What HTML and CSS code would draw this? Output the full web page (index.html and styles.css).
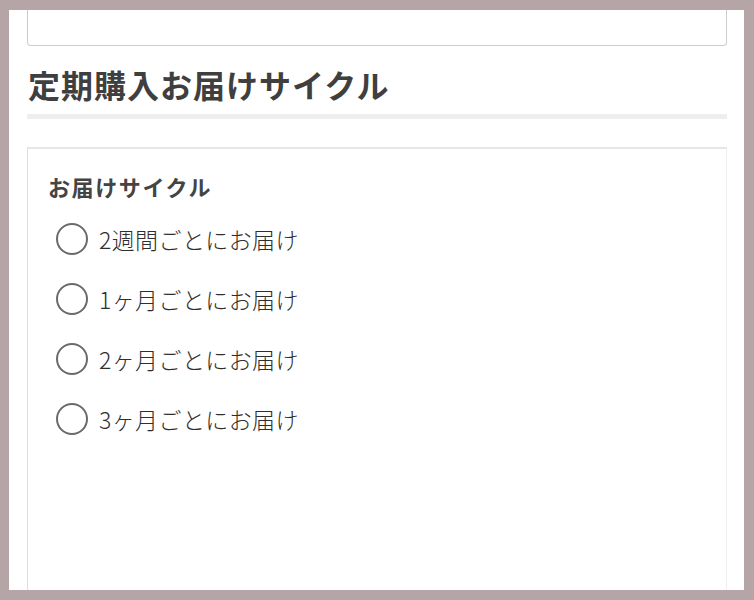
FILE: index.html
```html
<!DOCTYPE html>
<html lang="ja">
<head>
  <meta charset="UTF-8" />
  <meta name="viewport" content="width=device-width, initial-scale=1.0"/>
  <title>定期購入お届けサイクル</title>
  <link rel="stylesheet" href="styles.css">
</head>
<body>
  <div class="page">
    <div class="prev-card"></div>

    <h2 class="section-title">定期購入お届けサイクル</h2>

    <div class="cycle-card">
      <h3 class="cycle-label">お届けサイクル</h3>
      <div class="options">
        <label class="option"><input type="radio" name="cycle" value="2w"><span>2週間ごとにお届け</span></label>
        <label class="option"><input type="radio" name="cycle" value="1m"><span>1ヶ月ごとにお届け</span></label>
        <label class="option"><input type="radio" name="cycle" value="2m"><span>2ヶ月ごとにお届け</span></label>
        <label class="option"><input type="radio" name="cycle" value="3m"><span>3ヶ月ごとにお届け</span></label>
      </div>
    </div>
  </div>
</body>
</html>
```

FILE: styles.css
```css
* {
  margin: 0;
  padding: 0;
  box-sizing: border-box;
}

body {
  background: #b5a5a7;
  padding: 10px 10px 10px 9px;
  font-family: "Noto Sans CJK JP", "Noto Sans", sans-serif;
  color: #333;
}

.page {
  height: 580px;
  background: #fff;
  padding: 0 17px 0 18px;
  overflow: hidden;
}

.prev-card {
  height: 36px;
  border: 1px solid #ccc;
  border-top: none;
  border-radius: 0 0 4px 4px;
}

.section-title {
  margin-top: 17px;
  padding: 0 0 9px 1px;
  font-size: 32px;
  line-height: 42px;
  letter-spacing: 1px;
  font-weight: 700;
  color: #3f3f3f;
  border-bottom: 5px solid #eee;
}

.cycle-card {
  margin-top: 28px;
  height: 500px;
  border: 1px solid #ddd;
  border-top: 2px solid #e6e6e6;
  border-right-color: #eee;
  padding: 22px 0 0 20px;
}

.cycle-label {
  font-size: 22px;
  line-height: 30px;
  letter-spacing: 1.6px;
  font-weight: 700;
  color: #444;
}

.options {
  margin-top: 8px;
}

.option {
  display: flex;
  align-items: center;
  height: 60px;
  padding-left: 8px;
  font-size: 23px;
  letter-spacing: 0.4px;
  font-weight: 300;
  color: #2e2e2e;
  cursor: pointer;
}

.option input {
  appearance: none;
  width: 32px;
  height: 32px;
  border: 2px solid #6a6a6a;
  border-radius: 50%;
  margin-right: 11px;
  flex-shrink: 0;
}

.option input:checked {
  background: radial-gradient(circle, #333 40%, transparent 44%);
}
```
